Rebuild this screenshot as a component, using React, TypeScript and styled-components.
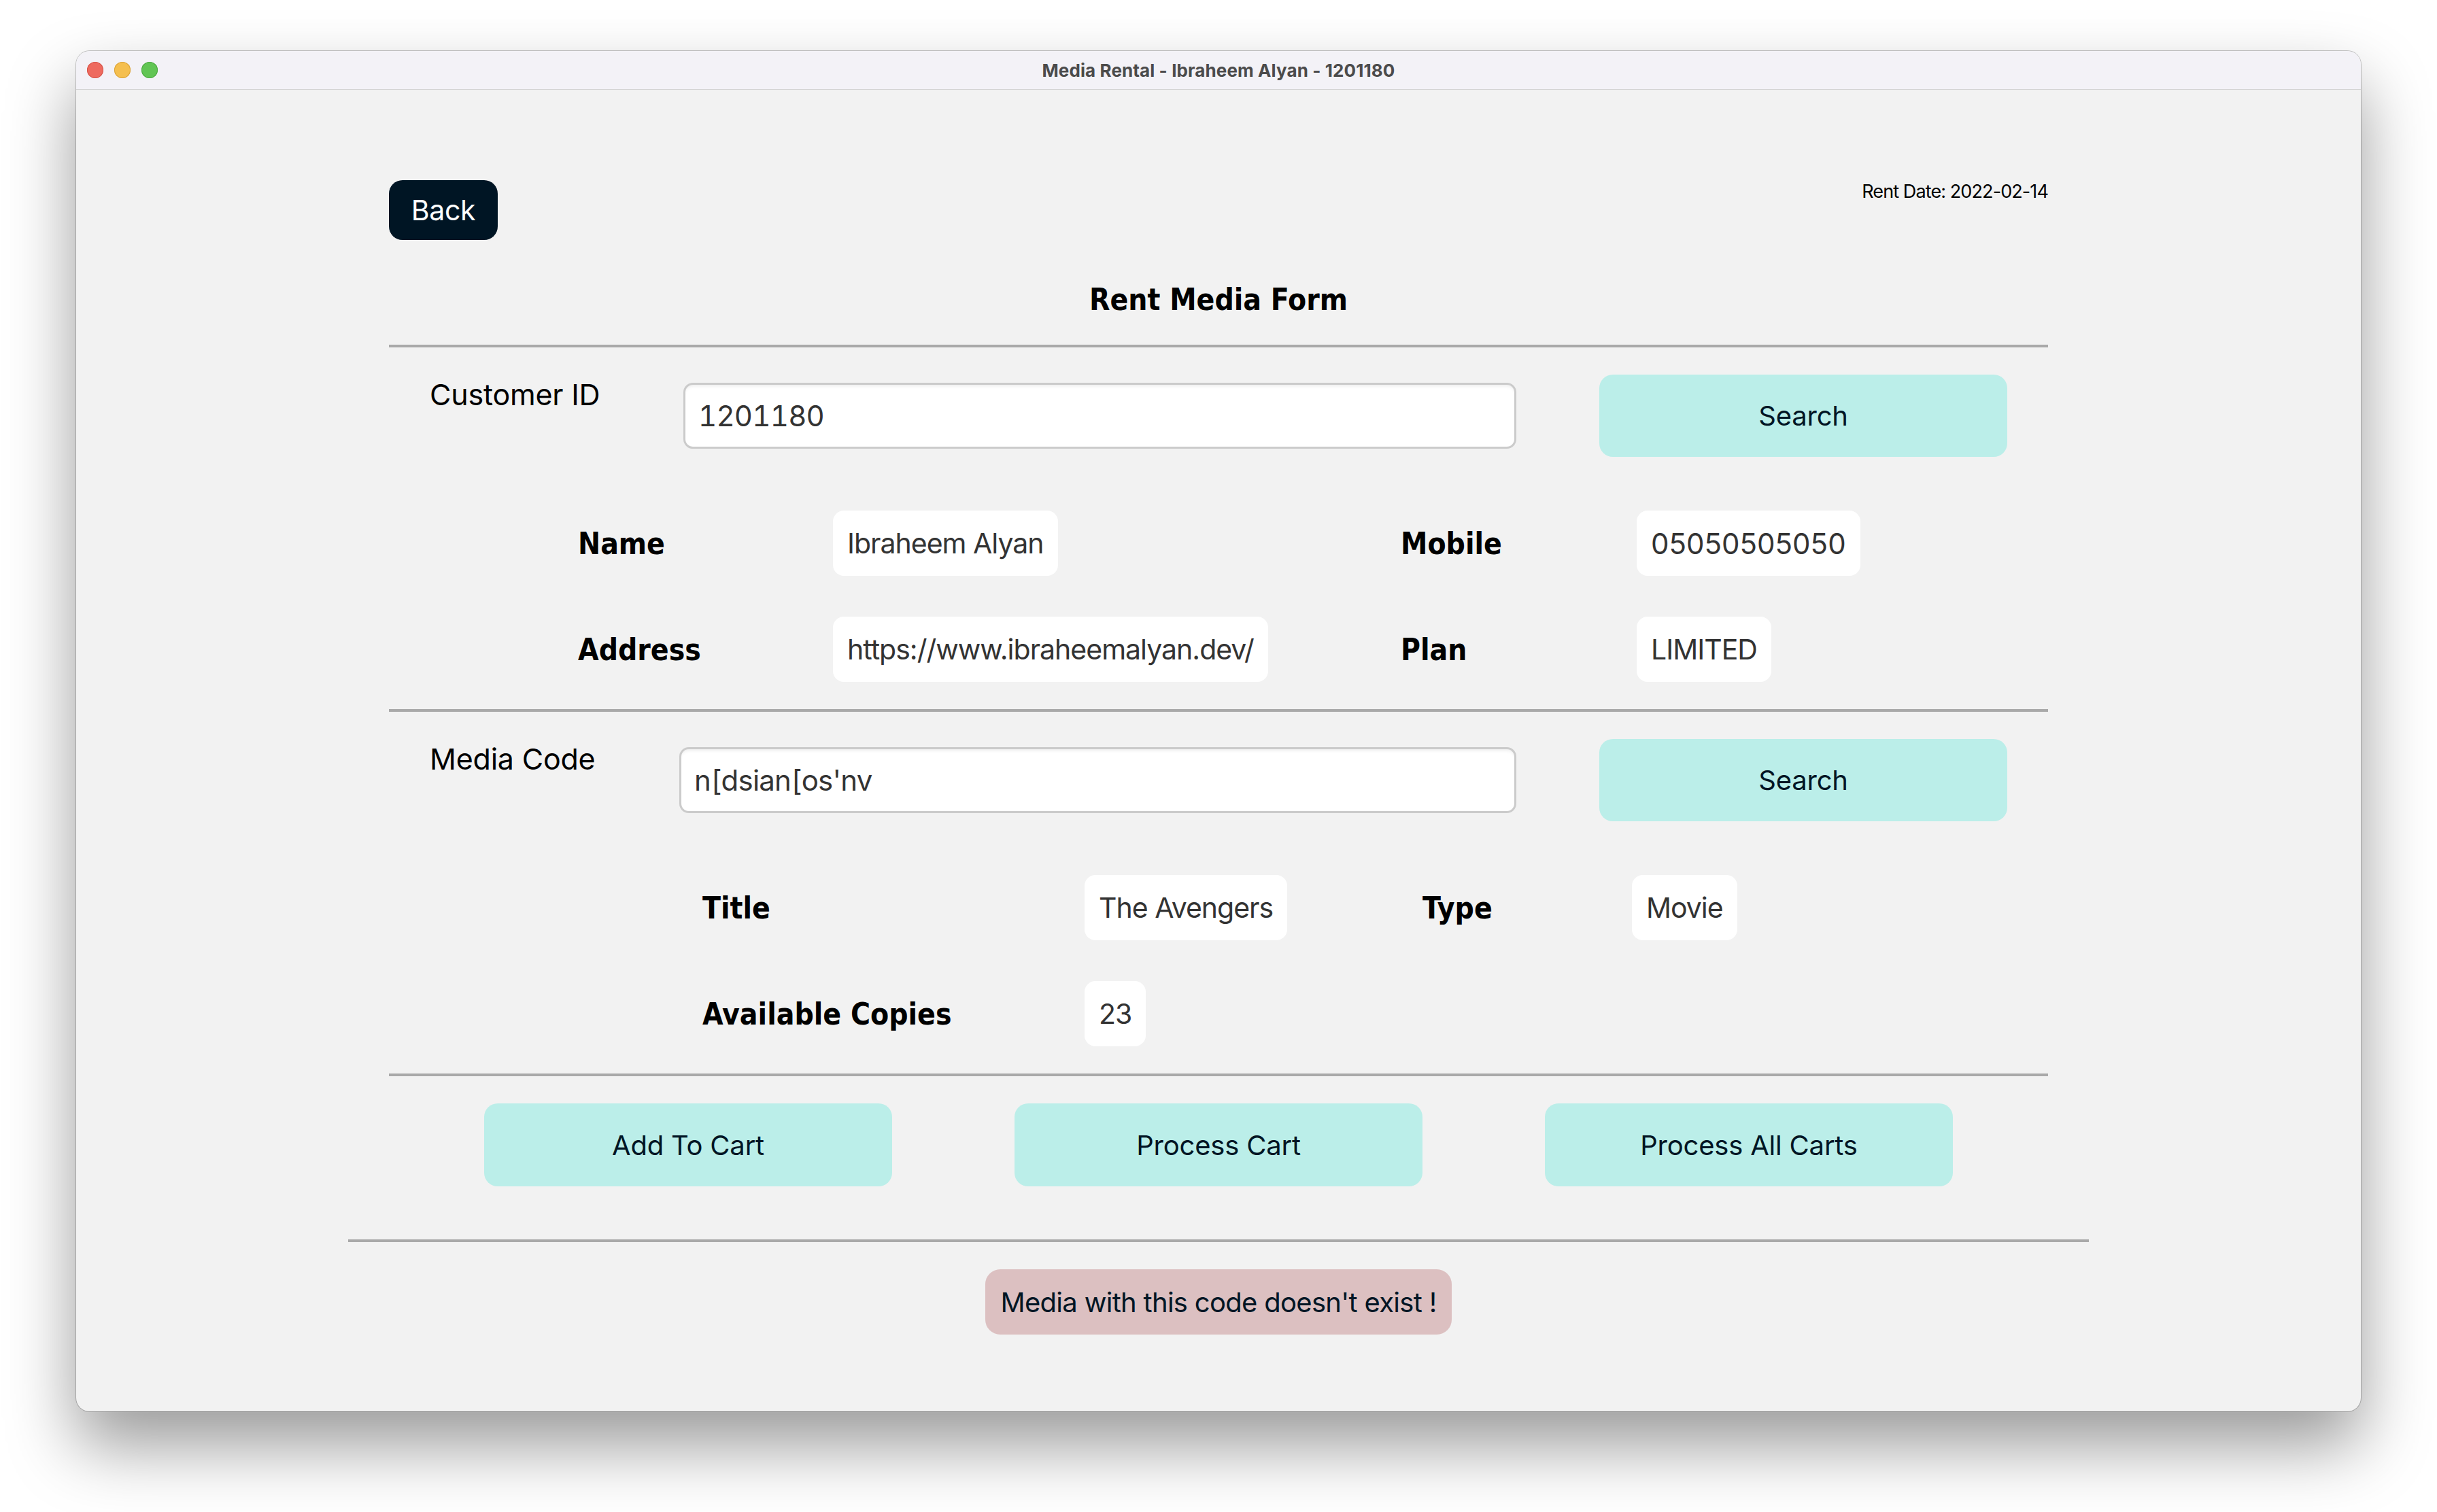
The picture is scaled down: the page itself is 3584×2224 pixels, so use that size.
import React from "react";
import styled, { createGlobalStyle } from "styled-components";

const GlobalStyle = createGlobalStyle`
  html, body { margin: 0; padding: 0; background: #ffffff; }
  body { font-family: Inter, "Noto Sans", sans-serif; -webkit-font-smoothing: antialiased; }
  * { box-sizing: border-box; }
`;

const SF = `Inter, "Noto Sans", sans-serif`;
const TAHOMA = `"DejaVu Sans Condensed", "DejaVu Sans", Verdana, sans-serif`;

const Stage = styled.div`
  width: 3584px;
  height: 2224px;
  padding: 75px 112px 0;
  overflow: hidden;
  background: #ffffff;
`;

const Window = styled.div`
  width: 3360px;
  height: 2001px;
  border-radius: 20px;
  background: #f2f2f2;
  box-shadow: 0 0 0 1px rgba(0, 0, 0, 0.22), 0 50px 100px rgba(0, 0, 0, 0.4);
  overflow: hidden;
  display: flex;
  flex-direction: column;
`;

const TitleBar = styled.div`
  height: 57px;
  flex: none;
  border-bottom: 1px solid #d3d3d3;
  background: #f3f2f7;
  display: grid;
  grid-template-columns: 1fr auto 1fr;
  align-items: center;
  padding: 0 16px;
`;

const Lights = styled.div`
  display: flex;
  gap: 16px;
`;

const Light = styled.span<{ $color: string; $edge: string }>`
  width: 24px;
  height: 24px;
  border-radius: 50%;
  background: ${(p) => p.$color};
  box-shadow: inset 0 0 0 1px ${(p) => p.$edge};
`;

const WindowTitle = styled.div`
  font-family: ${SF};
  font-weight: 700;
  font-size: 26px;
  letter-spacing: 0.1px;
  color: #4b4b4b;
  white-space: nowrap;
`;

const Content = styled.div`
  flex: 1;
  padding: 133px 460px 0;
  display: flex;
  flex-direction: column;
`;

const TopRow = styled.div`
  display: flex;
  justify-content: space-between;
  align-items: flex-start;
`;

const BackButton = styled.button`
  width: 160px;
  height: 88px;
  border: none;
  border-radius: 20px;
  background: #001524;
  color: #ffffff;
  font-family: ${SF};
  font-size: 41px;
  letter-spacing: -0.3px;
  padding: 0;
  cursor: pointer;
`;

const RentDate = styled.div`
  font-family: ${SF};
  font-size: 27px;
  letter-spacing: -0.9px;
  line-height: 34px;
  color: #000;
`;

const FormTitle = styled.h1`
  margin: 62px 0 0;
  text-align: center;
  font-family: ${TAHOMA};
  font-stretch: condensed;
  font-weight: 700;
  font-size: 44px;
  line-height: 52px;
  color: #000;
`;

const Divider = styled.div<{ $top: number; $wide?: boolean }>`
  height: 4px;
  background: #a9a9a9;
  margin-top: ${(p) => p.$top}px;
  margin-left: ${(p) => (p.$wide ? -60 : 0)}px;
  margin-right: ${(p) => (p.$wide ? -60 : 0)}px;
`;

const SearchRow = styled.div`
  display: flex;
  align-items: center;
  margin-top: 40px;
  padding: 0 60px;
  height: 121px;
`;

const FieldLabel = styled.label<{ $width: number }>`
  width: ${(p) => p.$width}px;
  flex: none;
  align-self: flex-start;
  padding-top: 3px;
  font-family: ${SF};
  font-size: 43px;
  letter-spacing: -0.2px;
  line-height: 52px;
  color: #000;
`;

const TextInput = styled.input<{ $width: number }>`
  width: ${(p) => p.$width}px;
  height: 97px;
  flex: none;
  border: 3px solid #cbcbcb;
  border-radius: 14px;
  background: #ffffff;
  box-shadow: inset 0 5px 5px -3px rgba(0, 0, 0, 0.08);
  padding: 0 19px;
  font-family: ${SF};
  font-size: 42px;
  letter-spacing: -0.8px;
  font-variant-numeric: tabular-nums;
  color: #333333;
  outline: none;
`;

const ActionButton = styled.button<{ $push?: boolean }>`
  width: 600px;
  height: ${(p) => (p.$push ? 121 : 122)}px;
  flex: none;
  margin-left: ${(p) => (p.$push ? "auto" : "0")};
  border: none;
  border-radius: 20px;
  background: #bbeee9;
  color: #001524;
  font-family: ${SF};
  font-size: 40px;
  letter-spacing: -0.2px;
  padding: 0;
  cursor: pointer;
`;

const InfoGrid = styled.div<{ $columns: string; $indent: number }>`
  display: grid;
  grid-template-columns: ${(p) => p.$columns};
  grid-auto-rows: 96px;
  row-gap: 60px;
  align-items: center;
  margin-top: 79px;
  padding-left: ${(p) => p.$indent}px;
`;

const InfoLabel = styled.div`
  font-family: ${TAHOMA};
  font-stretch: condensed;
  font-weight: 700;
  font-size: 44px;
  color: #000;
  white-space: nowrap;
`;

const ValueBox = styled.div<{ $numeric?: boolean }>`
  justify-self: start;
  height: 96px;
  display: flex;
  align-items: center;
  padding: 0 21px;
  background: #ffffff;
  border-radius: 16px;
  font-family: ${SF};
  font-size: ${(p) => (p.$numeric ? 42 : 41)}px;
  letter-spacing: ${(p) => (p.$numeric ? 0 : -1)}px;
  color: #333333;
  white-space: nowrap;
`;

const ButtonRow = styled.div`
  display: flex;
  justify-content: center;
  gap: 180px;
  margin-top: 40px;
`;

const ErrorBox = styled.div`
  align-self: center;
  margin-top: 40px;
  height: 96px;
  display: flex;
  align-items: center;
  padding: 0 22px;
  background: #dcc0c1;
  border-radius: 22px;
  font-family: ${SF};
  font-size: 40px;
  letter-spacing: -0.7px;
  color: #001524;
  white-space: nowrap;
`;

export default function App() {
  return (
    <>
      <GlobalStyle />
      <Stage>
        <Window>
          <TitleBar>
            <Lights>
              <Light $color="#ee6a5f" $edge="#d5544a" />
              <Light $color="#f5bf4f" $edge="#d9a23a" />
              <Light $color="#61c554" $edge="#4ea843" />
            </Lights>
            <WindowTitle>Media Rental - Ibraheem Alyan - 1201180</WindowTitle>
            <div />
          </TitleBar>
          <Content>
            <TopRow>
              <BackButton>Back</BackButton>
              <RentDate>Rent Date: 2022-02-14</RentDate>
            </TopRow>
            <FormTitle>Rent Media Form</FormTitle>
            <Divider $top={40} />

            <SearchRow>
              <FieldLabel $width={373}>Customer ID</FieldLabel>
              <TextInput $width={1225} defaultValue="1201180" />
              <ActionButton $push>Search</ActionButton>
            </SearchRow>

            <InfoGrid $columns="375px 835px 347px auto" $indent={278}>
              <InfoLabel>Name</InfoLabel>
              <ValueBox>Ibraheem Alyan</ValueBox>
              <InfoLabel>Mobile</InfoLabel>
              <ValueBox $numeric>05050505050</ValueBox>
              <InfoLabel>Address</InfoLabel>
              <ValueBox>https://www.ibraheemalyan.dev/</ValueBox>
              <InfoLabel>Plan</InfoLabel>
              <ValueBox>LIMITED</ValueBox>
            </InfoGrid>

            <Divider $top={40} />

            <SearchRow>
              <FieldLabel $width={367}>Media Code</FieldLabel>
              <TextInput $width={1231} defaultValue="n[dsian[os'nv" />
              <ActionButton $push>Search</ActionButton>
            </SearchRow>

            <InfoGrid $columns="562px 497px 308px auto" $indent={461}>
              <InfoLabel>Title</InfoLabel>
              <ValueBox>The Avengers</ValueBox>
              <InfoLabel>Type</InfoLabel>
              <ValueBox>Movie</ValueBox>
              <InfoLabel>Available Copies</InfoLabel>
              <ValueBox>23</ValueBox>
            </InfoGrid>

            <Divider $top={40} />

            <ButtonRow>
              <ActionButton>Add To Cart</ActionButton>
              <ActionButton>Process Cart</ActionButton>
              <ActionButton>Process All Carts</ActionButton>
            </ButtonRow>

            <Divider $top={78} $wide />

            <ErrorBox>Media with this code doesn't exist !</ErrorBox>
          </Content>
        </Window>
      </Stage>
    </>
  );
}
